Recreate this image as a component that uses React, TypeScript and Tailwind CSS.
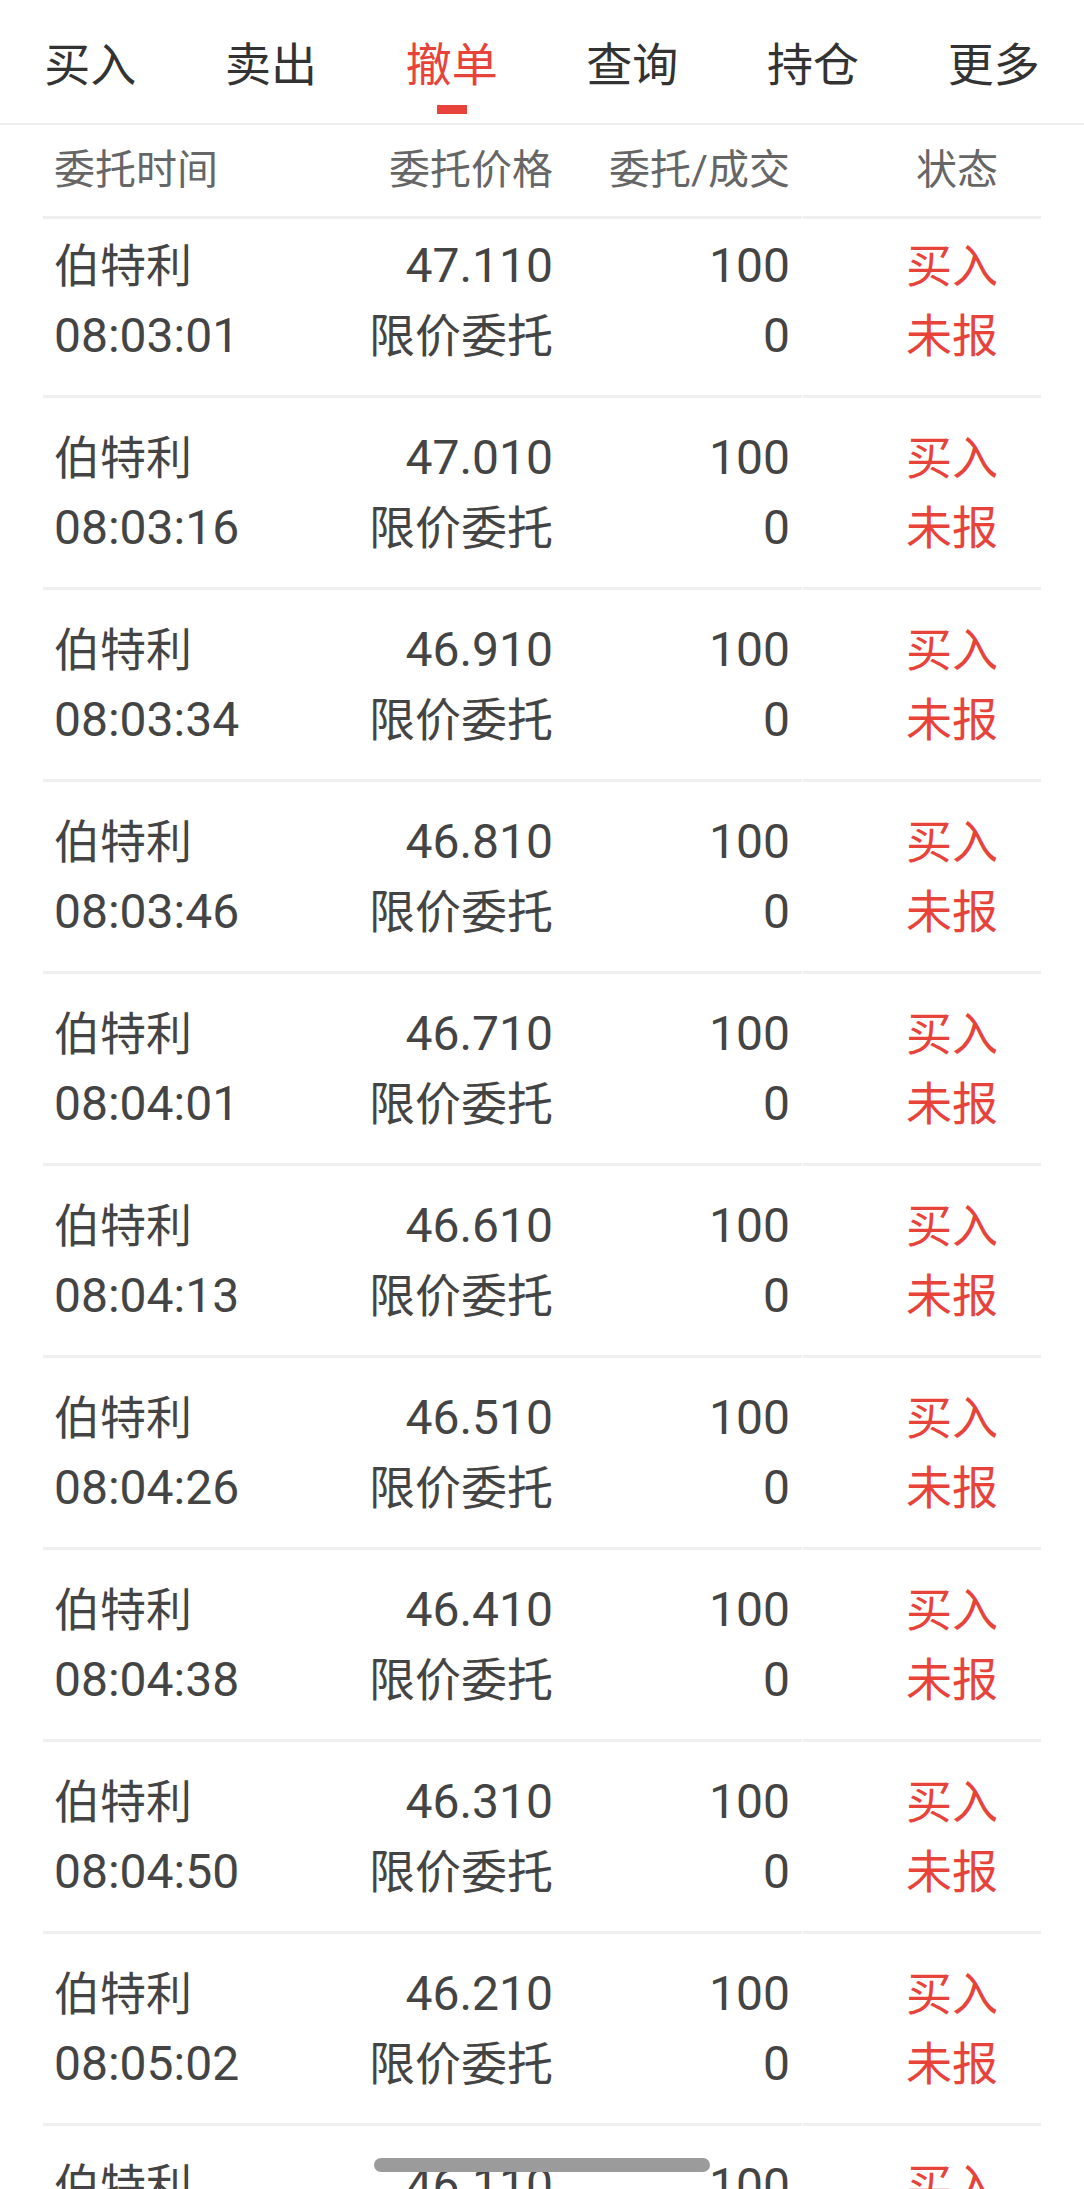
import React from "react"

type Order = {
  name: string
  time: string
  price: string
  qty: string
  filled: string
}

const tabs = ["买入", "卖出", "撤单", "查询", "持仓", "更多"]

const orders: Order[] = [
  { name: "伯特利", time: "08:03:01", price: "47.110", qty: "100", filled: "0" },
  { name: "伯特利", time: "08:03:16", price: "47.010", qty: "100", filled: "0" },
  { name: "伯特利", time: "08:03:34", price: "46.910", qty: "100", filled: "0" },
  { name: "伯特利", time: "08:03:46", price: "46.810", qty: "100", filled: "0" },
  { name: "伯特利", time: "08:04:01", price: "46.710", qty: "100", filled: "0" },
  { name: "伯特利", time: "08:04:13", price: "46.610", qty: "100", filled: "0" },
  { name: "伯特利", time: "08:04:26", price: "46.510", qty: "100", filled: "0" },
  { name: "伯特利", time: "08:04:38", price: "46.410", qty: "100", filled: "0" },
  { name: "伯特利", time: "08:04:50", price: "46.310", qty: "100", filled: "0" },
  { name: "伯特利", time: "08:05:02", price: "46.210", qty: "100", filled: "0" },
  { name: "伯特利", time: "08:05:14", price: "46.110", qty: "100", filled: "0" },
]

const gridCols = "grid grid-cols-[260px_263px_237px_238px]"

function Divider() {
  // the line has a tiny break where the status column starts
  return (
    <div className="flex h-[3px] gap-[1px]">
      <div className="w-[759px] bg-[#efefef]" />
      <div className="flex-1 bg-[#efefef]" />
    </div>
  )
}

function OrderRow({ order, first }: { order: Order; first: boolean }) {
  return (
    <div>
      <div className={`${gridCols} ${first ? "pt-[12px]" : "pt-[25px]"} pb-[24px] text-[46px] leading-[70px] text-[#444444]`}>
        <div className="pl-[11px] flex flex-col">
          <span>{order.name}</span>
          <span className="text-[48px]">{order.time}</span>
        </div>
        <div className="pr-[13px] flex flex-col items-end">
          <span className="text-[48px]">{order.price}</span>
          <span>限价委托</span>
        </div>
        <div className="pr-[13px] flex flex-col items-end text-[48px]">
          <span>{order.qty}</span>
          <span>{order.filled}</span>
        </div>
        <div className="pr-[43px] flex flex-col items-end text-[#e8433a]">
          <span>买入</span>
          <span>未报</span>
        </div>
      </div>
      <Divider />
    </div>
  )
}

export default function App() {
  const active = 2

  return (
    <div
      className="relative h-[2189px] w-[1084px] overflow-hidden bg-white"
      style={{ fontFamily: "Roboto, 'Noto Sans CJK SC', sans-serif" }}
    >
      {/* Tabs */}
      <div className="grid grid-cols-6 h-[125px] border-b-2 border-[#efefef]">
        {tabs.map((t, i) => (
          <div key={t} className="flex flex-col items-center pt-[42px]">
            <span className={`text-[46px] leading-[46px] ${i === active ? "text-[#e8433a]" : "text-[#333333]"}`}>
              {t}
            </span>
            {i === active && <div className="mt-[17px] h-[9px] w-[30px] bg-[#e8433a]" />}
          </div>
        ))}
      </div>

      <div className="mx-[43px]">
        {/* Column header */}
        <div className={`${gridCols} h-[91px] items-center text-[41px] text-[#666666]`}>
          <div className="pl-[11px]">委托时间</div>
          <div className="pr-[13px] text-right">委托价格</div>
          <div className="pr-[13px] text-right">委托/成交</div>
          <div className="pr-[43px] text-right">状态</div>
        </div>
        <Divider />

        {orders.map((o, i) => (
          <OrderRow key={o.time} order={o} first={i === 0} />
        ))}
      </div>

      {/* home indicator */}
      <div className="absolute left-[374px] top-[2158px] h-[14px] w-[336px] rounded-full bg-[#9b9b9b]" />
    </div>
  )
}
